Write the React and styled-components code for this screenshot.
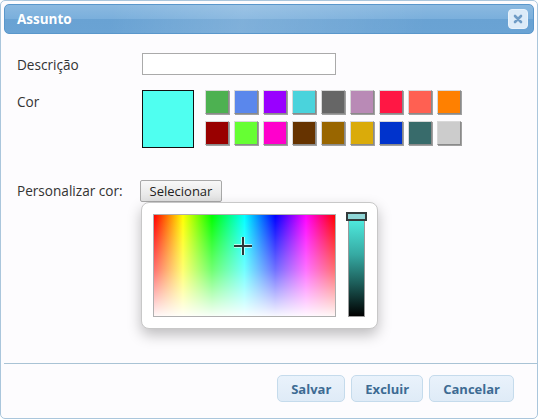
import React, { useState } from "react";
import styled, { createGlobalStyle } from "styled-components";

const GlobalStyle = createGlobalStyle`
  body {
    margin: 0;
    background: #ffffff;
    font-family: "Open Sans", "DejaVu Sans", sans-serif;
  }
`;

const Dialog = styled.div`
  width: 538px;
  height: 419px;
  box-sizing: border-box;
  border: 1px solid #aac6dc;
  border-radius: 5px;
  padding: 3px;
  display: flex;
  flex-direction: column;
  background: #fdfcfe;
`;

const TitleBar = styled.div`
  height: 30px;
  box-sizing: border-box;
  border: 1px solid #5a97cb;
  border-radius: 5px;
  background: linear-gradient(100deg, rgba(255, 255, 255, 0) 20%, rgba(255, 255, 255, 0.15) 45%, rgba(255, 255, 255, 0) 80%),
    linear-gradient(to bottom, #8bb9e0 0%, #7aafdc 50%, #69a2d3 51%, #6aa3d4 100%);
  display: flex;
  align-items: center;
  justify-content: space-between;
  padding: 0 5px 0 12px;
`;

const Title = styled.span`
  color: #ffffff;
  font-weight: 700;
  font-size: 13.5px;
`;

const CloseButton = styled.button`
  width: 20px;
  height: 20px;
  padding: 0;
  border: 1px solid #e8f2fb;
  border-radius: 4px;
  background: #dcebf8;
  display: flex;
  align-items: center;
  justify-content: center;
`;

const Content = styled.div`
  flex: 1;
  padding: 19px 13px 0;
  position: relative;
`;

const Row = styled.div`
  display: grid;
  grid-template-columns: 125px 1fr;
  align-items: ${(p) => (p.$top ? "start" : "center")};
  margin-top: ${(p) => p.$gap || 0}px;
`;

const Label = styled.label`
  font-size: 13.6px;
  color: #333333;
  padding-top: ${(p) => p.$pad || 0}px;
`;

const TextInput = styled.input`
  width: 194px;
  height: 22px;
  box-sizing: border-box;
  border: 1px solid #aaaaaa;
  background: #ffffff;
`;

const ColorArea = styled.div`
  display: flex;
  align-items: flex-start;
  gap: 11px;
`;

const Current = styled.div`
  width: 52px;
  height: 58px;
  box-sizing: border-box;
  border: 1px solid #111111;
  background: ${(p) => p.$color};
`;

const Palette = styled.div`
  display: grid;
  grid-template-columns: repeat(9, 24px);
  grid-auto-rows: 24px;
  column-gap: 5px;
  row-gap: 7px;
`;

const Swatch = styled.div`
  box-sizing: border-box;
  border: 1px solid;
  border-color: #d8d8d8 #8a8a8a #8a8a8a #d8d8d8;
  box-shadow: 1px 1px 0 #a0a0a0;
  background: ${(p) => p.$color};
`;

const PickButton = styled.button`
  width: 82px;
  height: 22px;
  box-sizing: border-box;
  padding: 0;
  margin-left: -2px;
  font-family: inherit;
  font-size: 13px;
  color: #222222;
  border: 1px solid #a8a8a8;
  border-radius: 2px;
  background: linear-gradient(to bottom, #f8f8f8, #e2e2e2);
`;

const Popup = styled.div`
  position: absolute;
  left: 137px;
  top: 168px;
  width: 237px;
  height: 127px;
  box-sizing: border-box;
  border: 1px solid #c8c8c8;
  border-radius: 8px;
  background: #ffffff;
  box-shadow: 0 6px 14px rgba(0, 0, 0, 0.25);
  display: flex;
  align-items: flex-start;
  gap: 12px;
  padding: 11px 0 0 11px;
`;

const Spectrum = styled.div`
  position: relative;
  width: 183px;
  height: 103px;
  box-sizing: border-box;
  border: 1px solid #b0b0b0;
  background: linear-gradient(to bottom, rgba(255, 255, 255, 0) 0%, rgba(255, 255, 255, 0.45) 55%, rgba(255, 255, 255, 0.97) 100%),
    linear-gradient(to right, #ff0000 0%, #ffff00 16%, #00ff00 32%, #00ffff 50%, #0000ff 67%, #ff00ff 84%, #ff0000 100%);
`;

const Cross = styled.svg`
  position: absolute;
  left: 79px;
  top: 21px;
`;

const Slider = styled.div`
  position: relative;
  width: 17px;
  height: 97px;
  margin-top: 6px;
  box-sizing: border-box;
  border: 1px solid #9a9a9a;
  background: linear-gradient(to bottom, #4ee8dc 0%, #36aaa3 35%, #1d5f5b 65%, #000000 100%);
`;

const Handle = styled.div`
  position: absolute;
  left: -3px;
  top: -9px;
  width: 21px;
  height: 9px;
  box-sizing: border-box;
  border: 2px solid #333b3b;
  background: #8fd6d6;
`;

const ButtonPane = styled.div`
  border-top: 1px solid #a9c3d5;
  margin-right: -3px;
  padding: 11px 23px 13px 0;
  display: flex;
  justify-content: flex-end;
  gap: 6px;
`;

const ActionButton = styled.button`
  height: 27px;
  box-sizing: border-box;
  padding: 0 ${(p) => p.$pad || 13}px;
  font-family: inherit;
  font-size: 13px;
  font-weight: 700;
  color: #3d6b93;
  border: 1px solid #c5dbec;
  border-radius: 5px;
  background: linear-gradient(to bottom, #e9f2fb, #dfebf7);
`;

const palette = [
  "#4db151", "#5a87ec", "#9900ff", "#4ad3dc", "#666666", "#b98ab6", "#ff1744", "#ff6052", "#ff8000",
  "#990000", "#66ff33", "#ff00cc", "#663300", "#996600", "#daab0a", "#0033cc", "#386b6b", "#cccccc",
];

export default function App() {
  const [color, setColor] = useState("#4ffff0");

  return (
    <>
      <GlobalStyle />
      <Dialog>
        <TitleBar>
          <Title>Assunto</Title>
          <CloseButton aria-label="fechar">
            <svg width="10" height="10" viewBox="0 0 10 10">
              <path d="M2 2 L8 8 M8 2 L2 8" stroke="#6f9cc6" strokeWidth="2.6" strokeLinecap="round" />
            </svg>
          </CloseButton>
        </TitleBar>

        <Content>
          <Row>
            <Label>Descrição</Label>
            <TextInput type="text" />
          </Row>

          <Row $top $gap={15}>
            <Label $pad={2}>Cor</Label>
            <ColorArea>
              <Current $color={color} />
              <Palette>
                {palette.map((c) => (
                  <Swatch key={c} $color={c} onClick={() => setColor(c)} />
                ))}
              </Palette>
            </ColorArea>
          </Row>

          <Row $gap={31}>
            <Label>Personalizar cor:</Label>
            <div>
              <PickButton>Selecionar</PickButton>
            </div>
          </Row>

          <Popup>
            <Spectrum>
              <Cross width="20" height="20" viewBox="0 0 20 20">
                <path d="M10 1 V19 M1 10 H19" stroke="#ffffff" strokeWidth="4" opacity="0.6" />
                <path d="M10 1 V19 M1 10 H19" stroke="#2f3838" strokeWidth="2" />
              </Cross>
            </Spectrum>
            <Slider>
              <Handle />
            </Slider>
          </Popup>
        </Content>

        <ButtonPane>
          <ActionButton>Salvar</ActionButton>
          <ActionButton>Excluir</ActionButton>
          <ActionButton>Cancelar</ActionButton>
        </ButtonPane>
      </Dialog>
    </>
  );
}
